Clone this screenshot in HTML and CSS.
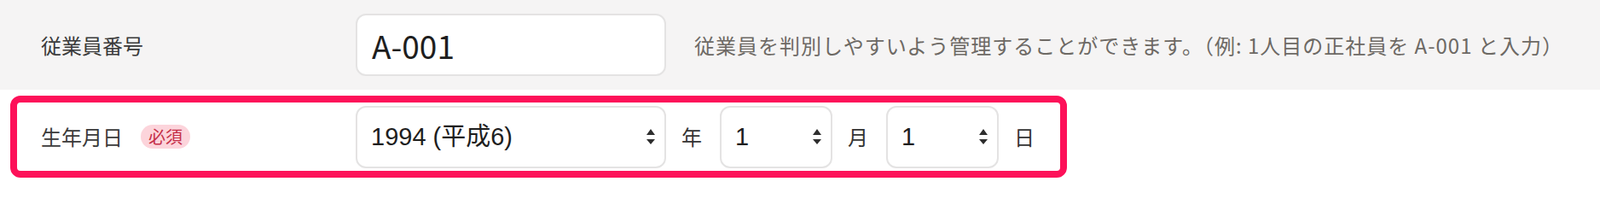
FILE: index.html
```html
<!DOCTYPE html>
<html lang="ja">
<head>
<meta charset="utf-8">
<title>従業員情報</title>
<link rel="stylesheet" href="styles.css">
</head>
<body>
<div class="form">
  <div class="row row-muted">
    <div class="label">従業員番号</div>
    <input class="text-input" type="text" value="A-001">
    <p class="help">従業員を判別しやすいよう管理することができます。（例: 1人目の正社員を A-001 と入力）</p>
  </div>
  <div class="row row-highlight">
    <div class="label">生年月日<span class="badge">必須</span></div>
    <div class="date">
      <span class="select-wrap select-year">
        <select class="select"><option>1994 (平成6)</option></select>
        <svg class="arrows" viewBox="0 0 10 18" width="10" height="18"><path d="M0 7 L5 0 L10 7 Z M0 12 L10 12 L5 18 Z"/></svg>
      </span>
      <span class="unit">年</span>
      <span class="select-wrap select-small">
        <select class="select"><option>1</option></select>
        <svg class="arrows" viewBox="0 0 10 18" width="10" height="18"><path d="M0 7 L5 0 L10 7 Z M0 12 L10 12 L5 18 Z"/></svg>
      </span>
      <span class="unit">月</span>
      <span class="select-wrap select-small">
        <select class="select"><option>1</option></select>
        <svg class="arrows" viewBox="0 0 10 18" width="10" height="18"><path d="M0 7 L5 0 L10 7 Z M0 12 L10 12 L5 18 Z"/></svg>
      </span>
      <span class="unit">日</span>
    </div>
  </div>
</div>
</body>
</html>
```

FILE: styles.css
```css
html, body {
  margin: 0;
  padding: 0;
  background: #ffffff;
}

body {
  font-family: "Noto Sans CJK JP", "Noto Sans", sans-serif;
  color: #333333;
  width: 1876px;
  height: 211px;
  overflow: hidden;
}

.row {
  display: flex;
  align-items: center;
  box-sizing: border-box;
}

.row-muted {
  height: 105px;
  padding-left: 48px;
  background: #f5f4f4;
}

.row-highlight {
  margin: 7px 0 0 12px;
  width: 1239px;
  height: 96px;
  padding-left: 28px;
  border: 8px solid #fd1159;
  border-radius: 12px;
}

.label {
  flex: 0 0 369px;
  display: flex;
  align-items: center;
  font-size: 24px;
  line-height: 1;
  color: #3a3a3a;
}

.badge {
  display: inline-flex;
  align-items: center;
  height: 28px;
  margin-left: 21px;
  padding: 0 9px;
  border-radius: 14px;
  background: #fcd4db;
  color: #c52f48;
  font-size: 20px;
  line-height: 1;
}

.text-input {
  box-sizing: border-box;
  width: 364px;
  height: 73px;
  margin: 0;
  padding: 0 17px;
  border: 2px solid #e4e3e3;
  border-radius: 12px;
  background: #ffffff;
  font-family: "Noto Sans CJK JP", sans-serif;
  font-size: 37px;
  color: #1e1e1e;
  outline: none;
}

.help {
  margin: 0 0 0 33px;
  font-size: 24px;
  line-height: 1;
  letter-spacing: 1px;
  color: #6d6964;
  white-space: nowrap;
}

.date {
  display: flex;
  align-items: center;
}

.select-wrap {
  position: relative;
  display: block;
  height: 73px;
}

.select-year {
  width: 364px;
}

.select-small {
  width: 132px;
}

.select {
  -webkit-appearance: none;
  appearance: none;
  box-sizing: border-box;
  width: 100%;
  height: 100%;
  margin: 0;
  padding: 0 30px 0 16px;
  border: 2px solid #e4e3e3;
  border-radius: 12px;
  background: #ffffff;
  font-family: "Liberation Sans", "Noto Sans CJK JP", sans-serif;
  font-size: 29px;
  color: #1e1e1e;
  outline: none;
}

.arrows {
  position: absolute;
  right: 13px;
  top: 50%;
  transform: translateY(-50%);
  fill: #2e2e2e;
  pointer-events: none;
}

.unit {
  width: 24px;
  margin: 0 21px 0 18px;
  font-size: 24px;
  line-height: 1;
  color: #333333;
}

.unit:last-child {
  margin-right: 0;
}
```
